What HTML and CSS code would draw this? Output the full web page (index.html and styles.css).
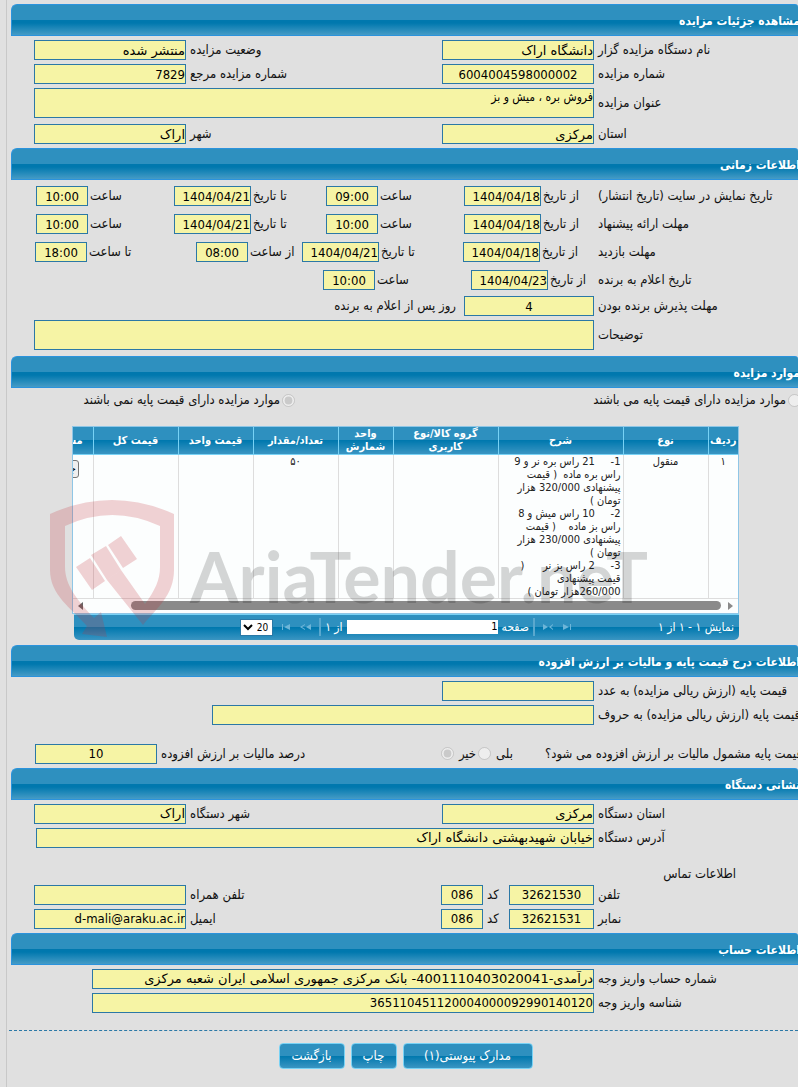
FILE: index.html
```html
<!DOCTYPE html>
<html lang="fa" dir="rtl">
<head>
    <meta charset="utf-8">
    <title>مشاهده جزئیات مزایده</title>
    <link rel="stylesheet" href="styles.css">
</head>
<body>
<main class="page">
    <h2 class="section-title">مشاهده جزئیات مزایده</h2>
    <div class="rows">
        <div class="row">
            <label for="org">نام دستگاه مزایده گزار</label>
            <input type="text" id="org" value="دانشگاه اراک" readonly>
            <label for="state">وضعیت مزایده</label>
            <input type="text" id="state" value="منتشر شده" readonly>
        </div>
        <div class="row">
            <label for="num">شماره مزایده</label>
            <input type="text" id="num" class="num center" value="6004004598000002" readonly>
            <label for="refnum">شماره مزایده مرجع</label>
            <input type="text" id="refnum" class="num" value="7829" readonly>
        </div>
        <div class="row row-wide">
            <label for="subject">عنوان مزایده</label>
            <textarea id="subject" readonly>فروش بره ، میش و بز</textarea>
        </div>
        <div class="row row-after-area">
            <label for="province">استان</label>
            <input type="text" id="province" value="مرکزی" readonly>
            <label for="city">شهر</label>
            <input type="text" id="city" value="اراک" readonly>
        </div>
    </div>

    <h2 class="section-title">اطلاعات زمانی</h2>
    <div class="rows rows-time">
        <div class="time-row">
            <span class="time-label">تاریخ نمایش در سایت (تاریخ انتشار)</span>
            <div class="pair"><label for="d1">از تاریخ</label><input type="text" id="d1" class="num date" value="1404/04/18" readonly></div>
            <div class="pair"><label for="t1">ساعت</label><input type="text" id="t1" class="num time" value="09:00" readonly></div>
            <div class="pair"><label for="d2">تا تاریخ</label><input type="text" id="d2" class="num date" value="1404/04/21" readonly></div>
            <div class="pair"><label for="t2">ساعت</label><input type="text" id="t2" class="num time" value="10:00" readonly></div>
        </div>
        <div class="time-row">
            <span class="time-label">مهلت ارائه پیشنهاد</span>
            <div class="pair"><label for="d3">از تاریخ</label><input type="text" id="d3" class="num date" value="1404/04/18" readonly></div>
            <div class="pair"><label for="t3">ساعت</label><input type="text" id="t3" class="num time" value="10:00" readonly></div>
            <div class="pair"><label for="d4">تا تاریخ</label><input type="text" id="d4" class="num date" value="1404/04/21" readonly></div>
            <div class="pair"><label for="t4">ساعت</label><input type="text" id="t4" class="num time" value="10:00" readonly></div>
        </div>
        <div class="time-row time-visit">
            <span class="time-label">مهلت بازدید</span>
            <div class="pair"><label for="d5">از تاریخ</label><input type="text" id="d5" class="num date" value="1404/04/18" readonly></div>
            <div class="pair"><label for="d6">تا تاریخ</label><input type="text" id="d6" class="num date" value="1404/04/21" readonly></div>
            <div class="pair"><label for="t5">از ساعت</label><input type="text" id="t5" class="num time" value="08:00" readonly></div>
            <div class="pair"><label for="t6">تا ساعت</label><input type="text" id="t6" class="num time" value="18:00" readonly></div>
        </div>
        <div class="time-row time-winner">
            <span class="time-label">تاریخ اعلام به برنده</span>
            <div class="pair"><label for="d7">از تاریخ</label><input type="text" id="d7" class="num date" value="1404/04/23" readonly></div>
            <div class="pair"><label for="t7">ساعت</label><input type="text" id="t7" class="num time" value="10:00" readonly></div>
        </div>
        <div class="row row-accept">
            <label for="accept">مهلت پذیرش برنده بودن</label>
            <input type="text" id="accept" class="num center" value="4" readonly>
            <span>روز پس از اعلام به برنده</span>
        </div>
        <div class="row row-wide">
            <label for="notes">توضیحات</label>
            <textarea id="notes" readonly></textarea>
        </div>
    </div>

    <h2 class="section-title">موارد مزایده</h2>
    <div class="base-price">
        <div class="choice"><input type="radio" id="bp1" name="bp" disabled><label for="bp1">موارد مزایده دارای قیمت پایه می باشند</label></div>
        <div class="choice"><input type="radio" id="bp2" name="bp" checked disabled><label for="bp2">موارد مزایده دارای قیمت پایه نمی باشند</label></div>
    </div>

    <div class="grid-box">
        <div class="grid-view">
            <table class="items">
                <colgroup>
                    <col class="c-row"><col class="c-type"><col class="c-desc"><col class="c-group"><col class="c-unit">
                    <col class="c-count"><col class="c-price"><col class="c-total"><col class="c-docs">
                </colgroup>
                <thead>
                    <tr>
                        <th>ردیف</th>
                        <th>نوع</th>
                        <th>شرح</th>
                        <th>گروه کالا/نوع<br>کاربری</th>
                        <th>واحد<br>شمارش</th>
                        <th>تعداد/مقدار</th>
                        <th>قیمت واحد</th>
                        <th>قیمت کل</th>
                        <th>مستندات</th>
                    </tr>
                </thead>
                <tbody>
                    <tr>
                        <td>۱</td>
                        <td>منقول</td>
                        <td class="desc">1-     21 راس بره نر و 9
راس بره ماده  ( قیمت
پیشنهادی 320/000 هزار
تومان )
2-     10 راس میش و 8
راس بز ماده    ( قیمت
پیشنهادی 230/000 هزار
تومان )
3-     2 راس بز نر      (
قیمت پیشنهادی
260/000هزار تومان )</td>
                        <td></td>
                        <td></td>
                        <td>۵۰</td>
                        <td></td>
                        <td></td>
                        <td><button type="button" class="details">جزئیات</button></td>
                    </tr>
                </tbody>
            </table>
            <div class="scroll">
                <span class="arrow arrow-right"></span>
                <span class="thumb"></span>
                <span class="arrow arrow-left"></span>
            </div>
        </div>
        <div class="pager">
            <span class="pager-info">نمایش ۱ - ۱ از ۱</span>
            <svg class="nav" width="30" height="8" viewBox="0 0 30 8">
                <path d="M0 1l5 3-5 3zM10 1L6 4l4 3V6L8 4l2-2zM20 1l6 3-6 3zM27 1h1v6h-1z"/>
            </svg>
            <span class="sep"></span>
            <label for="pg">صفحه</label>
            <input type="text" id="pg" class="num" value="1">
            <span>از ۱</span>
            <span class="sep"></span>
            <svg class="nav" width="30" height="8" viewBox="0 0 30 8">
                <path d="M1 1h1v6h-1zM9 1l-6 3 6 3zM24 1l-5 3 5 3V6l-3-2 3-2zM30 1l-5 3 5 3z"/>
            </svg>
            <select aria-label="تعداد در صفحه"><option>20</option></select>
        </div>
        <div class="watermark">
            <svg width="126" height="140" viewBox="0 0 126 140">
                <g fill="#c4303c" fill-opacity=".22">
                    <path d="M1 14Q63-14 125 14V70C125 95 108 108 94 125L58 80 72 70 96 104C106 90 111 80 111 67V26Q63 4 16 26V67C16 85 28 100 45 118L52 112 58 137 33 134 38 126C22 108 1 95 1 70Z"/>
                    <path d="M27 67L41 58 56 81 43 90ZM42 55L57 46 72 70 58 80ZM59 45L72 36 88 59 74 68Z"/>
                </g>
            </svg>
            <span>AriaTender.neT</span>
        </div>
    </div>

    <h2 class="section-title">اطلاعات درج قیمت پایه و مالیات بر ارزش افزوده</h2>
    <div class="rows">
        <div class="row">
            <label for="price">قیمت پایه (ارزش ریالی مزایده) به عدد</label>
            <input type="text" id="price" readonly>
        </div>
        <div class="row row-words">
            <label for="words">قیمت پایه (ارزش ریالی مزایده) به حروف</label>
            <input type="text" id="words" readonly>
        </div>
        <div class="vat-row">
            <span class="vat-question">قیمت پایه مشمول مالیات بر ارزش افزوده می شود؟</span>
            <label for="vat1" class="vat-option">بلی</label>
            <input type="radio" id="vat1" name="vat" disabled>
            <label for="vat2" class="vat-option">خیر</label>
            <input type="radio" id="vat2" name="vat" checked disabled>
            <label for="vat" class="vat-percent">درصد مالیات بر ارزش افزوده</label>
            <input type="text" id="vat" class="num center" value="10" readonly>
        </div>
    </div>

    <h2 class="section-title">نشانی دستگاه</h2>
    <div class="rows">
        <div class="row">
            <label for="oprovince">استان دستگاه</label>
            <input type="text" id="oprovince" value="مرکزی" readonly>
            <label for="ocity">شهر دستگاه</label>
            <input type="text" id="ocity" value="اراک" readonly>
        </div>
        <div class="row row-wide row-address">
            <label for="address">آدرس دستگاه</label>
            <input type="text" id="address" value="خیابان شهیدبهشتی دانشگاه اراک" readonly>
        </div>
        <h3 class="contact-title">اطلاعات تماس</h3>
        <div class="row row-phone">
            <label for="tel">تلفن</label>
            <input type="text" id="tel" class="num center" value="32621530" readonly>
            <label for="telcode">کد</label>
            <input type="text" id="telcode" class="num center" value="086" readonly>
            <label for="mobile">تلفن همراه</label>
            <input type="text" id="mobile" readonly>
        </div>
        <div class="row row-phone">
            <label for="fax">نمابر</label>
            <input type="text" id="fax" class="num center" value="32621531" readonly>
            <label for="faxcode">کد</label>
            <input type="text" id="faxcode" class="num center" value="086" readonly>
            <label for="email">ایمیل</label>
            <input type="text" id="email" class="num" value="d-mali@araku.ac.ir" readonly>
        </div>
    </div>

    <h2 class="section-title">اطلاعات حساب</h2>
    <div class="rows rows-account">
        <div class="row row-wide">
            <label for="account">شماره حساب واریز وجه</label>
            <input type="text" id="account" value="درآمدی-4001110403020041- بانک مرکزی جمهوری اسلامی ایران شعبه مرکزی" readonly>
        </div>
        <div class="row row-wide">
            <label for="payid">شناسه واریز وجه</label>
            <input type="text" id="payid" class="num" value="365110451120004000092990140120" readonly>
        </div>
    </div>

    <div class="actions">
        <button type="button" class="btn btn-docs">مدارک پیوستی(۱)</button>
        <button type="button" class="btn btn-print">چاپ</button>
        <button type="button" class="btn btn-back">بازگشت</button>
    </div>
</main>
</body>
</html>
```

FILE: styles.css
```css
* { box-sizing: border-box; }
html { background: #e0e0e0; overflow-x: hidden; }
body { margin: 0; font: 13px/16px "DejaVu Sans Condensed", "DejaVu Sans", sans-serif; color: #111; overflow: hidden; }
input, textarea, select, button { font-family: inherit; margin: 0; }
label, span { white-space: nowrap; }

.page { margin-left: 6px; border-left: 1px solid #c8c8c8; padding: 4px 0 18px 4px; }

.section-title {
    margin: 0; height: 32px; font-size: 12px; line-height: 32px; color: #fff; white-space: nowrap;
    text-indent: -2px;
    border: 1px solid #2b93dd; border-right: none; border-radius: 6px 3px 0 0;
    background: linear-gradient(#2e90bf 0, #2e90bf 50%, #0078ae 50%, #0078ae 60%, #459bc6 100%);
}

/* form rows */
.rows { display: grid; gap: 4px; padding: 4px 0 4px 23px; }
.row { display: grid; grid-template-columns: 200px 152px 1fr 152px; column-gap: 4px; align-items: center; }
.row label { justify-self: end; }
.row-wide { grid-template-columns: 200px 1fr; }
.row-words { grid-template-columns: 200px 382px; }
.row-accept { grid-template-columns: 200px 130px 1fr; margin-top: -2px; }
.row-accept span { padding-right: 4px; }
.row-phone { grid-template-columns: 200px 85px 18px 42px 1fr 152px; }
.row-after-area { margin-top: 2px; }
.row-address { margin-left: 2px; }

input[type=text], textarea {
    width: 100%; height: 20px; padding: 0; border: 1px solid #2b78a6; border-radius: 0;
    background: #f6f4a5; color: #000; font-family: "DejaVu Sans", sans-serif; font-size: 13px; line-height: 18px; outline: none;
}
textarea { display: block; height: 30px; resize: none; font-family: inherit; font-size: 12px; line-height: 16px; overflow: hidden; }
input.num { font-family: inherit; }
.center { text-align: center; }

.rows-time { padding: 6px 0 6px 23px; }
.time-row { display: grid; grid-template-columns: 200px 134px 138px 1fr 138px; height: 20px; margin: 0 0 4px 2px; align-items: center; }
.time-visit { grid-template-columns: 200px 135px 161px 1fr 161px; margin-left: 1px; }
.time-winner { grid-template-columns: 200px 127px 148px; }
.time-label { justify-self: end; }
.pair { display: flex; justify-content: flex-end; align-items: center; gap: 2px; }
.pair .date { width: 77px; }
.pair .time { width: 52px; text-align: center; }

input[type=radio] { width: 13px; height: 13px; flex: none; }
.base-price { display: grid; grid-template-columns: 506px 1fr; padding-top: 4px; margin-right: -3px; }
.choice { display: flex; align-items: center; gap: 2px; height: 16px; }

/* items table */
.grid-box { position: relative; margin: 18px 59px 5px 61px; }
.grid-view { border: 1px solid #8fc6e6; overflow: hidden; background: #fcfefe; }
.items { table-layout: fixed; width: 709px; border-collapse: collapse; }
.c-row { width: 30px; }
.c-type, .c-count, .c-total { width: 85px; }
.c-desc { width: 125px; }
.c-group { width: 105px; }
.c-unit { width: 55px; }
.c-price { width: 75px; }
.c-docs { width: 64px; }
.items th {
    height: 27px; padding: 0; font-size: 11px; line-height: 13px; color: #fff;
    border-left: 1px solid #78d2f5; border-bottom: 1px solid #78d2f5;
    background: linear-gradient(#2e90bf 0, #2e90bf 50%, #0078ae 50%, #3a95c2 100%);
}
.items td { height: 143px; padding: 0 2px; font-size: 11px; line-height: 13px; vertical-align: top; text-align: center; color: #222; border-left: 1px solid #ddd; border-bottom: 1px solid #ddd; }
.items .desc { text-align: start; white-space: pre; }
.details { height: 18px; margin-top: 5px; padding: 0 2px; font-size: 11px; border: 1px solid #777; border-radius: 3px; background: #efefef; }
.scroll { display: flex; align-items: center; gap: 7px; height: 14px; padding: 0 5px; }
.thumb { flex: 1; height: 9px; margin-left: 41px; border-radius: 5px; background: #8a8a8a; }
.arrow { border: 4px solid transparent; }
.arrow-right { border-width: 4px 0 4px 5px; border-left-color: #8a8a8a; }
.arrow-left { border-width: 4px 5px 4px 0; border-right-color: #666; }

.pager {
    display: flex; align-items: center; gap: 4px; height: 26px; padding: 0 5px; margin-left: 2px; color: #fff; font-size: 12px;
    border-top: 1px solid #78d2f5; border-radius: 0 0 5px 5px;
    background: linear-gradient(#2e90bf 0, #2e90bf 50%, #0078ae 50%, #3a95c2 100%);
}
.pager-info { margin-left: 77px; }
.pager .nav { fill: #6db5d8; margin: 0 4px; }
.pager .sep { width: 2px; height: 18px; background: #5aa8ce; }
.pager input { width: 151px; height: 14px; background: #fff; border: none; font-size: 11px; line-height: 14px; }
.pager select { width: 33px; height: 17px; padding: 0; border: 1px solid #2b78a6; background: #fff; font-size: 10px; }

.watermark { position: absolute; left: -23px; top: 74px; display: flex; direction: ltr; pointer-events: none; }
.watermark span { margin-left: 15px; padding-top: 34px; font: bold 70px/84px Lato, sans-serif; color: rgba(0, 0, 0, .16); }

/* vat and contact */
.vat-row { display: flex; align-items: center; gap: 2px; height: 20px; margin: 15px -4px 0 1px; }
.vat-question { margin-left: 30px; }
.vat-option { margin-left: 3px; }
.vat-percent { margin-right: auto; margin-left: 2px; }
.vat-row input[type=text] { width: 122px; }
.contact-title { margin: 14px 62px 0 0; font-size: 13px; font-weight: normal; line-height: 15px; }

.rows-account { padding-left: 81px; }
.actions { display: flex; justify-content: center; gap: 6px; margin: 13px 0 0 -2px; padding: 12px 0 0 4px; border-top: 1px dashed #2b78a6; }
.btn {
    height: 26px; padding: 0; font-size: 13px; color: #fff; border: 1px solid #78d2f5; border-radius: 4px;
    background: linear-gradient(#2e90bf 0, #2e90bf 50%, #0078ae 50%, #3a95c2 100%);
}
.btn-docs { width: 130px; }
.btn-print { width: 46px; }
.btn-back { width: 66px; }
```
